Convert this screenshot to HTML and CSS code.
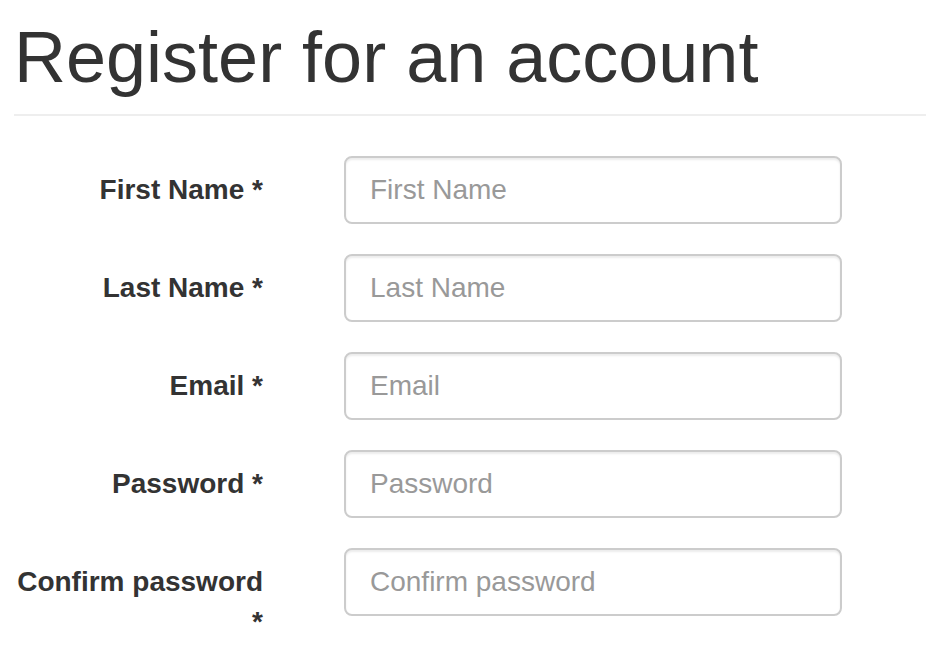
FILE: index.html
```html
<!DOCTYPE html>
<html lang="en">
<head>
<meta charset="utf-8">
<title>Register for an account</title>
<link rel="stylesheet" href="styles.css">
</head>
<body>
<div class="page">
  <div class="page-header">
    <h1 class="title">Register for an account</h1>
  </div>
  <form class="form">
    <div class="form-group">
      <label class="label" for="first">First Name *</label>
      <input class="control" id="first" type="text" placeholder="First Name">
    </div>
    <div class="form-group">
      <label class="label" for="last">Last Name *</label>
      <input class="control" id="last" type="text" placeholder="Last Name">
    </div>
    <div class="form-group">
      <label class="label" for="email">Email *</label>
      <input class="control" id="email" type="email" placeholder="Email">
    </div>
    <div class="form-group">
      <label class="label" for="pw">Password *</label>
      <input class="control" id="pw" type="password" placeholder="Password">
    </div>
    <div class="form-group">
      <label class="label" for="pw2">Confirm password *</label>
      <input class="control" id="pw2" type="password" placeholder="Confirm password">
    </div>
  </form>
</div>
</body>
</html>
```
FILE: styles.css
```css
html, body {
  margin: 0;
  padding: 0;
  background: #fff;
}
body {
  font-family: "Liberation Sans", Arial, Helvetica, sans-serif;
  color: #333;
  font-size: 28px;
  line-height: 1.42857;
}
.page {
  padding: 0 0 0 14px;
}
.page-header {
  padding-top: 17.5px;
  padding-bottom: 17px;
  border-bottom: 2px solid #eee;
  margin-bottom: 40px;
}
.title {
  margin: 0;
  font-size: 72px;
  font-weight: 500;
  line-height: 1.1;
  color: #333;
}
.form {
  margin: 0;
}
.form-group {
  display: grid;
  grid-template-columns: 249px 498px;
  column-gap: 81px;
  margin-bottom: 30px;
  align-items: start;
}
.label {
  padding-top: 14px;
  text-align: right;
  font-weight: bold;
  color: #333;
}
.control {
  box-sizing: border-box;
  width: 498px;
  height: 68px;
  padding: 12px 24px;
  font-family: inherit;
  font-size: 28px;
  line-height: 1.42857;
  color: #555;
  background: #fff;
  border: 2px solid #ccc;
  border-radius: 8px;
  box-shadow: inset 0 2px 2px rgba(0, 0, 0, 0.075);
  outline: none;
}
.control::placeholder {
  color: #999;
  opacity: 1;
}
```
